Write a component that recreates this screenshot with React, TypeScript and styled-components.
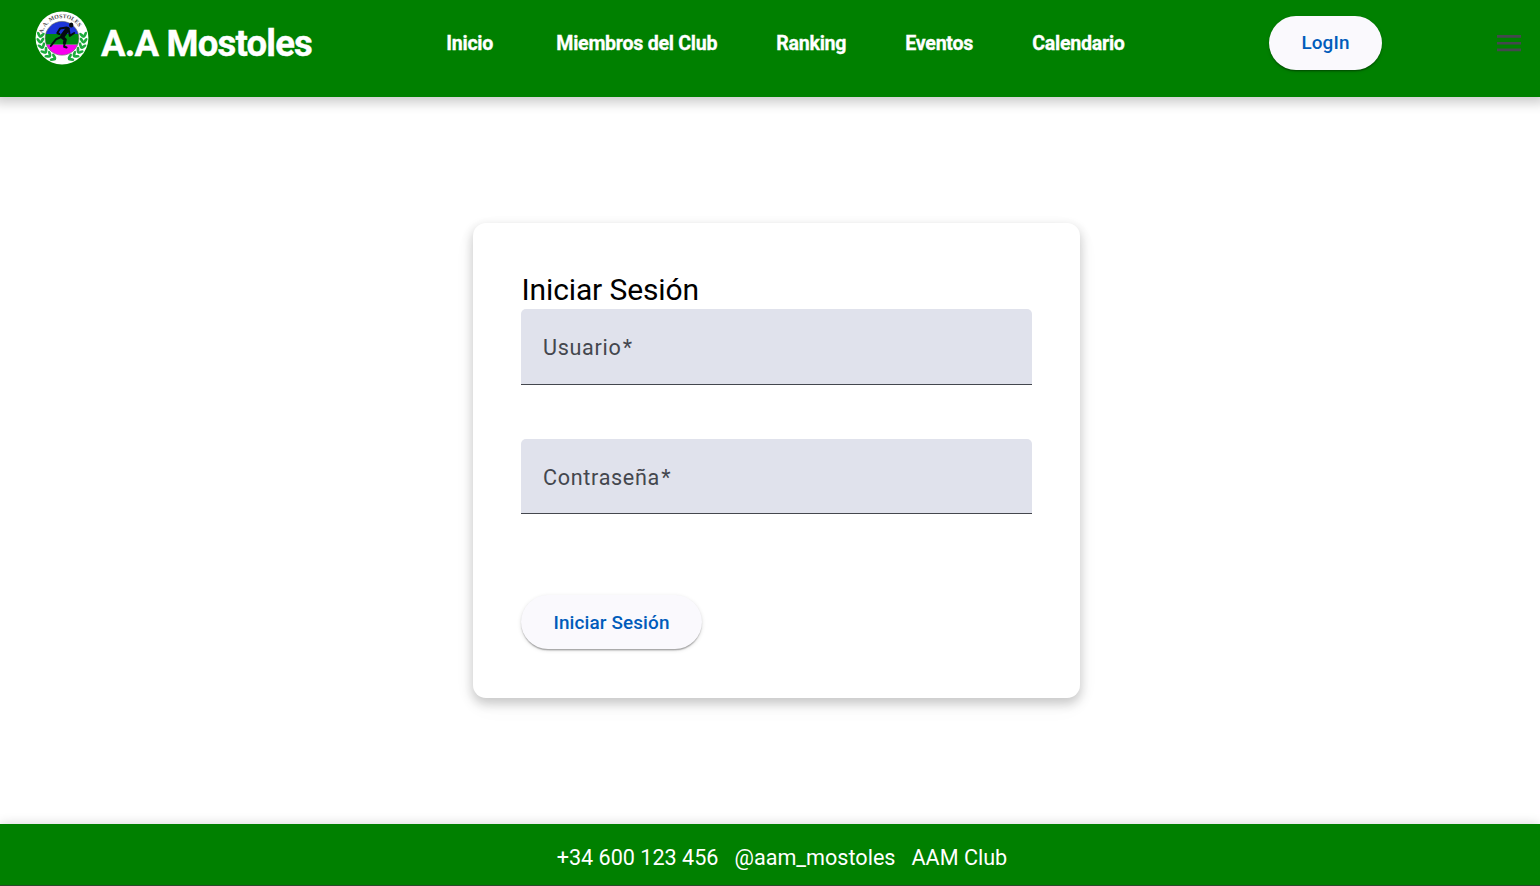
import React from "react";
import styled, { createGlobalStyle } from "styled-components";

const GlobalStyle = createGlobalStyle`
  * { box-sizing: border-box; }
  body { margin: 0; background: #fff; font-family: Roboto, "Liberation Sans", sans-serif; }
`;

const Page = styled.div`
  display: flex;
  flex-direction: column;
  height: 886px;
  overflow: hidden;
`;

const Header = styled.header`
  display: flex;
  align-items: flex-start;
  height: 97px;
  flex: none;
  padding-left: 35px;
  background: #008000;
  color: #fff;
  box-shadow: 0 0 11px 6px rgba(0, 0, 0, 0.2);
`;

const Logo = styled.svg`
  width: 54px;
  height: 54px;
  margin-top: 11px;
  flex: none;
`;

const Brand = styled.h1`
  width: 345px;
  margin: 0 0 0 12px;
  font-size: 36.5px;
  font-weight: 700;
  line-height: 87px;
  letter-spacing: -0.8px;
  -webkit-text-stroke: 0.4px #fff;
  white-space: nowrap;
`;

const Nav = styled.nav`
  display: flex;
  width: 823px;
`;

const NavLink = styled.a<{ $width: number }>`
  flex: none;
  width: ${(p) => p.$width}px;
  padding-left: 0.3px;
  font-size: 19.6px;
  font-weight: 700;
  line-height: 87px;
  letter-spacing: -0.27px;
  -webkit-text-stroke: 0.3px #fff;
  white-space: nowrap;
`;

const Button = styled.button<{ $width: number; $drop?: number }>`
  flex: none;
  width: ${(p) => p.$width}px;
  height: 54px;
  padding: ${(p) => p.$drop ?? 0}px 0 0;
  border: 0;
  border-radius: 27px;
  background: #faf9fd;
  color: #005cbb;
  font: 500 18.9px/52px Roboto, sans-serif;
  letter-spacing: 0.13px;
  box-shadow: 0 2.7px 1.35px -1.35px rgba(0, 0, 0, 0.2),
    0 1.35px 1.35px rgba(0, 0, 0, 0.14), 0 1.35px 4px rgba(0, 0, 0, 0.12);
`;

const HeaderButton = styled(Button)`
  margin-top: 16px;
`;

const MenuIcon = styled.svg`
  width: 24px;
  height: 17px;
  margin: 35px 0 0 115px;
  flex: none;
`;

const Main = styled.main`
  display: flex;
  flex: 1;
  justify-content: center;
  align-items: flex-start;
  padding: 126px 0 0 13px;
`;

const Card = styled.form`
  width: 607px;
  height: 475px;
  padding: 48px;
  border-radius: 13px;
  background: #fff;
  box-shadow: 0 5px 11px 1px rgba(0, 0, 0, 0.2), 0 8px 27px rgba(0, 0, 0, 0.03);
`;

const CardTitle = styled.h2`
  margin: 0;
  padding-left: 0.5px;
  font-size: 30px;
  font-weight: 400;
  line-height: 38px;
  letter-spacing: -0.12px;
  color: #000;
`;

const Field = styled.label<{ $height: number; $gap: number }>`
  display: block;
  height: ${(p) => p.$height}px;
  margin-bottom: ${(p) => p.$gap}px;
  padding-left: 22px;
  border-bottom: 1px solid #44474e;
  border-radius: 5px 5px 0 0;
  background: #e0e2ec;
  color: #44474e;
  font-size: 21.6px;
  line-height: 77px;
  letter-spacing: 0.675px;
`;

const Required = styled.span`
  margin-left: 1.3px;
`;

const Footer = styled.footer`
  display: flex;
  flex: none;
  gap: 16px;
  height: 62px;
  padding-left: 556.7px;
  border-bottom: 1px solid #2b4a2b;
  background: #008000;
  color: #fff;
  font-size: 21.6px;
  line-height: 67px;
  white-space: nowrap;
  box-shadow: 0 0 11px rgba(0, 0, 0, 0.16);
`;

const LINKS: [string, number][] = [
  ["Inicio", 110],
  ["Miembros del Club", 220],
  ["Ranking", 129],
  ["Eventos", 127],
  ["Calendario", 100],
];

const LEAVES = [8, -7, -22, -37, -52, -67];

function ClubLogo() {
  return (
    <Logo viewBox="0 0 54 54">
      <defs>
        <clipPath id="disc"><circle cx="27" cy="27.3" r="16.8" /></clipPath>
        <path id="arc" d="M7.6 22.5A19.9 19.9 0 0 1 46.4 22.5" />
      </defs>
      <circle cx="27" cy="27" r="26.4" fill="#fff" />
      <g clipPath="url(#disc)">
        <path fill="#1c35d8" d="M8 8h38v15H8z" />
        <path fill="#008a10" d="M8 23h38v10.8H8z" />
        <path fill="#f800ee" d="M8 33.8h38V46H8z" />
      </g>
      <circle cx="27" cy="27.3" r="16.9" fill="none" stroke="#555c55" strokeWidth=".6" />
      {[1, -1].map((side) => (
        <g key={side} transform={side === 1 ? undefined : "translate(54 0) scale(-1 1)"}>
          {LEAVES.map((a) => (
            <g key={a} transform={`rotate(${a} 27 27)`} fill="#1cab3c">
              <ellipse cx="3.7" cy="27" rx="1.4" ry="3.2" transform="rotate(-32 3.7 27)" />
              <ellipse cx="7" cy="27" rx="1.4" ry="3.2" transform="rotate(36 7 27)" />
            </g>
          ))}
        </g>
      ))}
      <text fontFamily="Liberation Serif, serif" fontSize="5.8" fontWeight="700" fill="#4a4a4a">
        <textPath href="#arc" startOffset="0">A. A. MOSTOLES</textPath>
      </text>
      <g stroke="#050b10" strokeLinecap="round" strokeLinejoin="round" fill="none">
        <path strokeWidth="4.6" d="M32.6 18.2L27.5 25" />
        <path strokeWidth="2" d="M31.5 16.4l-6.4 1-2.8 4.6 2 1M34 20l.8 4.8 4.4-2.8" />
        <path strokeWidth="3.2" d="M27 26l3.2 2.8-.7 3" />
        <path strokeWidth="2" d="M29.5 31.5l-.3 4.2 2.4.8M26 26l-5 2.4-4 5-1.2 1.6" />
      </g>
      <ellipse cx="36.2" cy="14" rx="2.2" ry="2.5" fill="#050b10" />
    </Logo>
  );
}

export default function App() {
  return (
    <>
      <GlobalStyle />
      <Page>
        <Header>
          <ClubLogo />
          <Brand>A.A Mostoles</Brand>
          <Nav>
            {LINKS.map(([label, width]) => (
              <NavLink key={label} $width={width}>{label}</NavLink>
            ))}
          </Nav>
          <HeaderButton $width={113}>LogIn</HeaderButton>
          <MenuIcon viewBox="0 0 24 17" fill="#44474e">
            <path d="M0 0h24v2.7H0zM0 6.9h24v2.7H0zM0 13.6h24v2.7H0z" />
          </MenuIcon>
        </Header>
        <Main>
          <Card>
            <CardTitle>Iniciar Sesión</CardTitle>
            <Field $height={76} $gap={54}>Usuario<Required>*</Required></Field>
            <Field $height={75} $gap={81}>Contraseña<Required>*</Required></Field>
            <Button type="button" $width={181} $drop={1}>Iniciar Sesión</Button>
          </Card>
        </Main>
        <Footer>
          <span>+34 600 123 456</span>
          <span>@aam_mostoles</span>
          <span>AAM Club</span>
        </Footer>
      </Page>
    </>
  );
}
